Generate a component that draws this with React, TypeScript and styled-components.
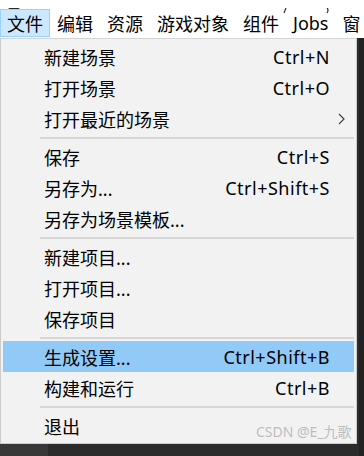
import React from 'react';
import styled, { createGlobalStyle } from 'styled-components';

const GlobalStyle = createGlobalStyle`
  html, body {
    margin: 0;
    padding: 0;
    background: #2b2b2b;
  }
  body {
    font-family: 'Noto Sans', 'Noto Sans CJK SC', sans-serif;
  }
`;

interface MenuEntry {
  label: string;
  shortcut?: string;
  submenu?: boolean;
  active?: boolean;
}

const groups: MenuEntry[][] = [
  [
    { label: '新建场景', shortcut: 'Ctrl+N' },
    { label: '打开场景', shortcut: 'Ctrl+O' },
    { label: '打开最近的场景', submenu: true },
  ],
  [
    { label: '保存', shortcut: 'Ctrl+S' },
    { label: '另存为...', shortcut: 'Ctrl+Shift+S' },
    { label: '另存为场景模板...' },
  ],
  [{ label: '新建项目...' }, { label: '打开项目...' }, { label: '保存项目' }],
  [
    { label: '生成设置...', shortcut: 'Ctrl+Shift+B', active: true },
    { label: '构建和运行', shortcut: 'Ctrl+B' },
  ],
  [{ label: '退出' }],
];

// the last one is clipped by the window edge in the screenshot
const topItems = ['文件', '编辑', '资源', '游戏对象', '组件', 'Jobs', '窗'];

const Page = styled.div`
  position: relative;
  width: 364px;
  height: 456px;
  overflow: hidden;
  display: flex;
  flex-direction: column;
  background: #2b2b2b;
`;

const Header = styled.div`
  background: #ffffff;
  height: 38px;
  display: flex;
  flex-direction: column;
`;

const TopStrip = styled.div`
  height: 9px;
`;

const MenuBar = styled.div`
  display: flex;
  height: 28px;
  white-space: nowrap;
`;

const BarItem = styled.div<{ $open?: boolean }>`
  display: flex;
  align-items: center;
  padding: 0 6px;
  border: 1px solid ${(p) => (p.$open ? '#99d1ff' : 'transparent')};
  background: ${(p) => (p.$open ? '#cce8ff' : 'transparent')};
  font-size: 18px;
  color: #000;
`;

const Body = styled.div`
  display: flex;
  flex: 1;
`;

const LeftColumn = styled.div`
  display: flex;
  flex-direction: column;
`;

const Dropdown = styled.div`
  width: 351px;
  padding: 2px;
  background: #f2f2f2;
  border: 1px solid #cccccc;
  border-top-color: #d4d4d4;
`;

const Row = styled.div<{ $active?: boolean }>`
  display: grid;
  grid-template-columns: 1fr auto 24px;
  align-items: center;
  height: 31px;
  padding-left: 41px;
  background: ${(p) => (p.$active ? '#91c9f7' : 'transparent')};
  font-size: 18px;
  color: #000;
  white-space: nowrap;
`;

const Shortcut = styled.span`
  text-align: right;
  letter-spacing: 0.5px;
`;

const Arrow = styled.span`
  display: flex;
  align-items: center;
  padding-left: 8px;
`;

const Separator = styled.div`
  height: 7px;
  display: flex;
  align-items: center;
  padding-left: 37px;

  &::after {
    content: '';
    flex: 1;
    height: 2px;
    background: #d7d7d7;
  }
`;

const BottomPanel = styled.div`
  flex: 1;
  display: flex;
`;

const BottomLeft = styled.div`
  width: 48px;
  background: #383838;
`;

const RightEdge = styled.div`
  flex: 1;
  background: #222222;
  border-left: 2px solid #2c2c2c;
`;

const Watermark = styled.div`
  position: absolute;
  left: 256px;
  top: 421px;
  font-size: 14px;
  color: rgba(170, 170, 170, 0.75);
  white-space: nowrap;
`;

function Chevron() {
  return (
    <svg width="7" height="12" viewBox="0 0 7 12">
      <path d="M1 1 L6 6 L1 11" fill="none" stroke="#444" strokeWidth="1.2" />
    </svg>
  );
}

export default function App() {
  return (
    <>
      <GlobalStyle />
      <Page>
        <Header>
          <TopStrip>
            <svg width="364" height="9" viewBox="0 0 364 9">
              <path d="M8 0 L20 0 L14 4 Z" fill="#2a2a2a" />
              <path d="M286 0 L284 5" stroke="#333" strokeWidth="1.2" />
              <path d="M327 0 Q329 2 327 5" fill="none" stroke="#333" strokeWidth="1.2" />
            </svg>
          </TopStrip>
          <MenuBar>
            {topItems.map((t, i) => (
              <BarItem key={t} $open={i === 0}>
                {t}
              </BarItem>
            ))}
          </MenuBar>
        </Header>
        <Body>
          <LeftColumn>
            <Dropdown>
              {groups.map((g, gi) => (
                <React.Fragment key={gi}>
                  {gi > 0 && <Separator />}
                  {g.map((e) => (
                    <Row key={e.label} $active={e.active}>
                      <span>{e.label}</span>
                      <Shortcut>{e.shortcut}</Shortcut>
                      <Arrow>{e.submenu && <Chevron />}</Arrow>
                    </Row>
                  ))}
                </React.Fragment>
              ))}
            </Dropdown>
            <BottomPanel>
              <BottomLeft />
            </BottomPanel>
          </LeftColumn>
          <RightEdge />
        </Body>
        <Watermark>CSDN @E_九歌</Watermark>
      </Page>
    </>
  );
}
